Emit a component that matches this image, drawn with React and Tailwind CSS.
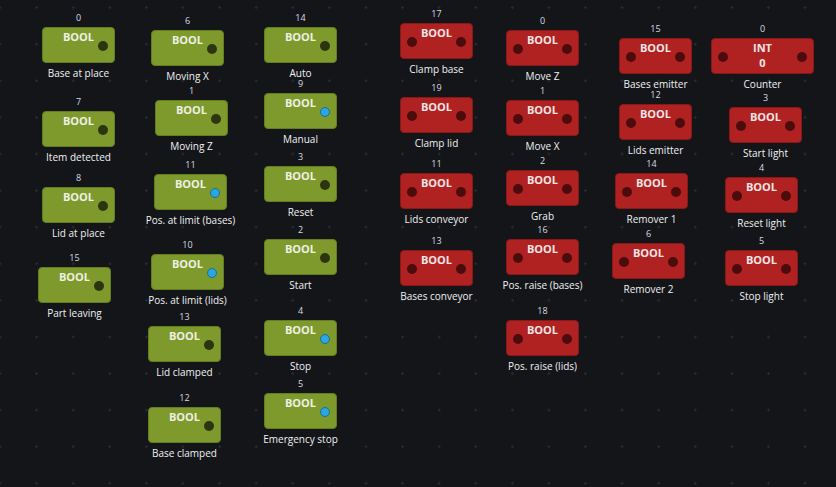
import React from 'react'

const green = [
  { n: '0', label: 'Base at place', x: 42, y: 27 },
  { n: '7', label: 'Item detected', x: 42, y: 111 },
  { n: '8', label: 'Lid at place', x: 42, y: 187 },
  { n: '15', label: 'Part leaving', x: 38, y: 267 },
  { n: '6', label: 'Moving X', x: 151, y: 30 },
  { n: '1', label: 'Moving Z', x: 155, y: 100 },
  { n: '11', label: 'Pos. at limit (bases)', x: 154, y: 174, on: true },
  { n: '10', label: 'Pos. at limit (lids)', x: 151, y: 254, on: true },
  { n: '13', label: 'Lid clamped', x: 148, y: 326 },
  { n: '12', label: 'Base clamped', x: 148, y: 407 },
  { n: '14', label: 'Auto', x: 264, y: 27 },
  { n: '9', label: 'Manual', x: 264, y: 93, on: true },
  { n: '3', label: 'Reset', x: 264, y: 166 },
  { n: '2', label: 'Start', x: 264, y: 239 },
  { n: '4', label: 'Stop', x: 264, y: 320, on: true },
  { n: '5', label: 'Emergency stop', x: 264, y: 393, on: true },
]

const red = [
  { n: '17', label: 'Clamp base', x: 400, y: 23 },
  { n: '19', label: 'Clamp lid', x: 400, y: 97 },
  { n: '11', label: 'Lids conveyor', x: 400, y: 173 },
  { n: '13', label: 'Bases conveyor', x: 400, y: 250 },
  { n: '0', label: 'Move Z', x: 506, y: 30 },
  { n: '1', label: 'Move X', x: 506, y: 100 },
  { n: '2', label: 'Grab', x: 506, y: 170 },
  { n: '16', label: 'Pos. raise (bases)', x: 506, y: 239 },
  { n: '18', label: 'Pos. raise (lids)', x: 506, y: 320 },
  { n: '15', label: 'Bases emitter', x: 619, y: 38 },
  { n: '12', label: 'Lids emitter', x: 619, y: 104 },
  { n: '14', label: 'Remover 1', x: 615, y: 173 },
  { n: '6', label: 'Remover 2', x: 612, y: 243 },
  { n: '0', label: 'Counter', x: 711, y: 38, int: true },
  { n: '3', label: 'Start light', x: 729, y: 107 },
  { n: '4', label: 'Reset light', x: 725, y: 177 },
  { n: '5', label: 'Stop light', x: 725, y: 250 },
]

// one node of the diagram: index above, typed block, name below
function Node({ n, label, x, y, kind, on, int }) {
  const w = int ? 'w-[103px]' : 'w-[73px]'
  return (
    <div className={`absolute flex flex-col items-center ${w}`} style={{ left: x, top: y - 15 }}>
      <div className="h-[12px] leading-[12px] text-[9px] text-[#d8dbe0] mb-[3px]">{n}</div>
      {kind === 'green' ? (
        <div className={`relative h-[36px] ${w} rounded-[4px] bg-[#7e9a2d] border border-[#637d1f]`}>
          <div className="text-center text-[11px] font-bold leading-[14px] mt-[2px] text-[#eef0e4]">BOOL</div>
          <div
            className={`absolute right-[6px] top-[13px] w-[10px] h-[10px] rounded-full ${
              on ? 'bg-[#2aa6e0] border border-[#1a6e94]' : 'bg-[#2c3510]'
            }`}
          />
        </div>
      ) : (
        <div className={`relative h-[36px] ${w} rounded-[4px] bg-[#b02222] border border-[#8a1818]`}>
          <div className="text-center text-[11px] font-bold leading-[14px] mt-[2px] text-[#f2e6e6]">
            {int ? 'INT' : 'BOOL'}
          </div>
          {int && <div className="text-center text-[11px] font-bold leading-[14px] mt-[1px] text-[#f2e6e6]">0</div>}
          <div className="absolute left-[6px] top-[13px] w-[10px] h-[10px] rounded-full bg-[#4c0c0e]" />
          <div className="absolute right-[6px] top-[13px] w-[10px] h-[10px] rounded-full bg-[#4c0c0e]" />
        </div>
      )}
      <div className="mt-[3px] h-[14px] leading-[14px] text-[10px] whitespace-nowrap text-[#f0f1f4]">{label}</div>
    </div>
  )
}

export default function App() {
  return (
    <div
      className="relative w-[836px] h-[487px] overflow-hidden bg-[#141518] bg-[radial-gradient(circle,#2a2c31_1px,transparent_1.3px)] bg-[size:36.6px_36.6px] bg-[position:-18.3px_-10.7px]"
      style={{ fontFamily: '"Open Sans", "Noto Sans", sans-serif' }}
    >
      {green.map((d, i) => (
        <Node key={'g' + i} {...d} kind="green" />
      ))}
      {red.map((d, i) => (
        <Node key={'r' + i} {...d} kind="red" />
      ))}
    </div>
  )
}
